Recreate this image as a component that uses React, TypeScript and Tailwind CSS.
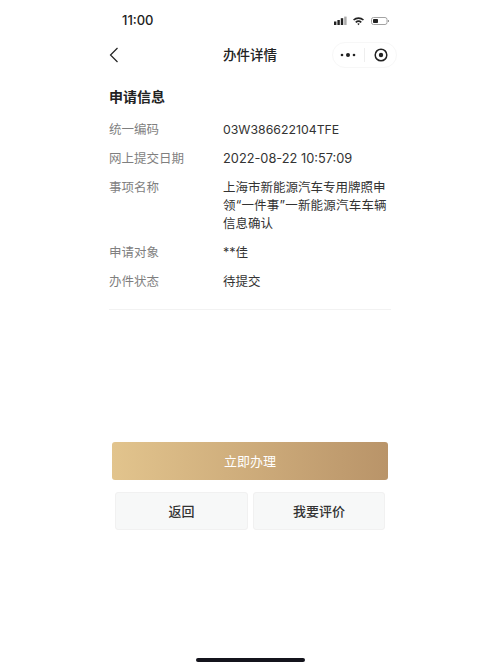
const font = "font-['Inter','Noto_Sans_CJK_SC',sans-serif]";

function Row({ label, value }: { label: string; value: React.ReactNode }) {
  return (
    <div className="flex text-[12.5px] leading-[18px]">
      <div className="w-[114px] shrink-0 text-[#7f7f7f]">{label}</div>
      <div className="whitespace-nowrap text-[#333333]">{value}</div>
    </div>
  );
}

export default function App() {
  return (
    <div className={`relative w-[500px] h-[667px] overflow-hidden bg-white ${font}`}>
      <div className="flex h-[39px] items-end justify-between pl-[122px] pr-[110px] pb-[11px]">
        <span className="text-[13px] leading-[16px] font-medium text-[#222]">11:00</span>
        <svg width="56" height="10" viewBox="0 0 56 10" className="mb-[2px]">
          <g fill="#222">
            <rect x="0" y="5.5" width="2.4" height="3.5" />
            <rect x="3.4" y="4" width="2.4" height="5" />
            <rect x="6.8" y="2.2" width="2.4" height="6.8" />
            <rect x="10.2" y="0.6" width="2.4" height="8.4" fill="#aaa" />
            <path d="M19 3.4a8.2 8.2 0 0 1 11 0l-1.1 1.2a6.5 6.5 0 0 0-8.8 0z" />
            <path d="M21.2 5.7a5 5 0 0 1 6.6 0l-1.1 1.2a3.3 3.3 0 0 0-4.4 0z" />
            <path d="M23.3 7.7a2 2 0 0 1 2.4 0L24.5 9.2z" />
            <rect x="37.5" y="1.5" width="15.5" height="7" rx="2" fill="none" stroke="#999" strokeWidth="0.9" />
            <rect x="39" y="3" width="5" height="4" rx="0.8" />
            <rect x="53.8" y="4" width="1.2" height="2" fill="#999" />
          </g>
        </svg>
      </div>

      <div className="flex h-[32px] items-center pl-[109px] pr-[103px]">
        <svg width="10" height="16" viewBox="0 0 10 16" fill="none" className="shrink-0">
          <path d="M8.5 1 1.5 8l7 7" stroke="#222" strokeWidth="1.2" />
        </svg>
        <div className="ml-[91px] w-[80px] text-center text-[13.5px] font-medium leading-[20px] text-[#222]">办件详情</div>
        <div className="ml-auto flex h-[26px] w-[65px] items-center rounded-full border border-[#f7f7f7]">
          <svg width="31" height="10" viewBox="0 0 31 10" className="shrink-0">
            <circle cx="9" cy="5" r="1.3" fill="#222" />
            <circle cx="15" cy="5" r="2" fill="#222" />
            <circle cx="21" cy="5" r="1.3" fill="#222" />
          </svg>
          <div className="h-[14px] w-px bg-[#eeeeee]" />
          <svg width="16" height="16" viewBox="0 0 16 16" className="ml-[8px] shrink-0" fill="none">
            <circle cx="8" cy="8" r="5.8" stroke="#222" strokeWidth="1.5" />
            <circle cx="8" cy="8" r="2.2" fill="#222" />
          </svg>
        </div>
      </div>

      <div className="mx-[109px] mt-[16px] w-[282px]">
        <div className="text-[14px] font-bold leading-[20px] text-[#222]">申请信息</div>
        <div className="mt-[14px] flex flex-col gap-[11px] border-b border-[#f2f2f2] pb-[18px]">
          <Row label="统一编码" value={<span className="text-[12.3px]">03W386622104TFE</span>} />
          <Row label="网上提交日期" value={<span className="text-[12.8px]">2022-08-22 10:57:09</span>} />
          <Row
            label="事项名称"
            value={
              <>
                上海市新能源汽车专用牌照申
                <br />
                <span className="tracking-[0.2px]">领“一件事”一新能源汽车车辆</span>
                <br />
                信息确认
              </>
            }
          />
          <Row label="申请对象" value="**佳" />
          <Row label="办件状态" value="待提交" />
        </div>
      </div>

      <div className="mx-[112px] mt-[132px] flex h-[38px] w-[276px] items-center justify-center rounded-[3px] bg-gradient-to-r from-[#e2c48d] to-[#b99469] pt-[2px] text-[13px] text-white">
        立即办理
      </div>
      <div className="ml-[115px] mt-[12px] flex w-[270px] gap-[5px]">
        <div className="flex h-[38px] w-[133px] items-center justify-center rounded-[3px] border border-[#f1f1f1] bg-[#f7f8f8] pt-[2px] text-[13px] font-medium text-[#333]">返回</div>
        <div className="flex h-[38px] w-[132px] items-center justify-center rounded-[3px] border border-[#f1f1f1] bg-[#f7f8f8] pt-[2px] text-[13px] font-medium text-[#333]">我要评价</div>
      </div>

      <div className="absolute bottom-[5px] left-[196px] h-[4px] w-[109px] rounded-full bg-[#14141c]" />
    </div>
  );
}
